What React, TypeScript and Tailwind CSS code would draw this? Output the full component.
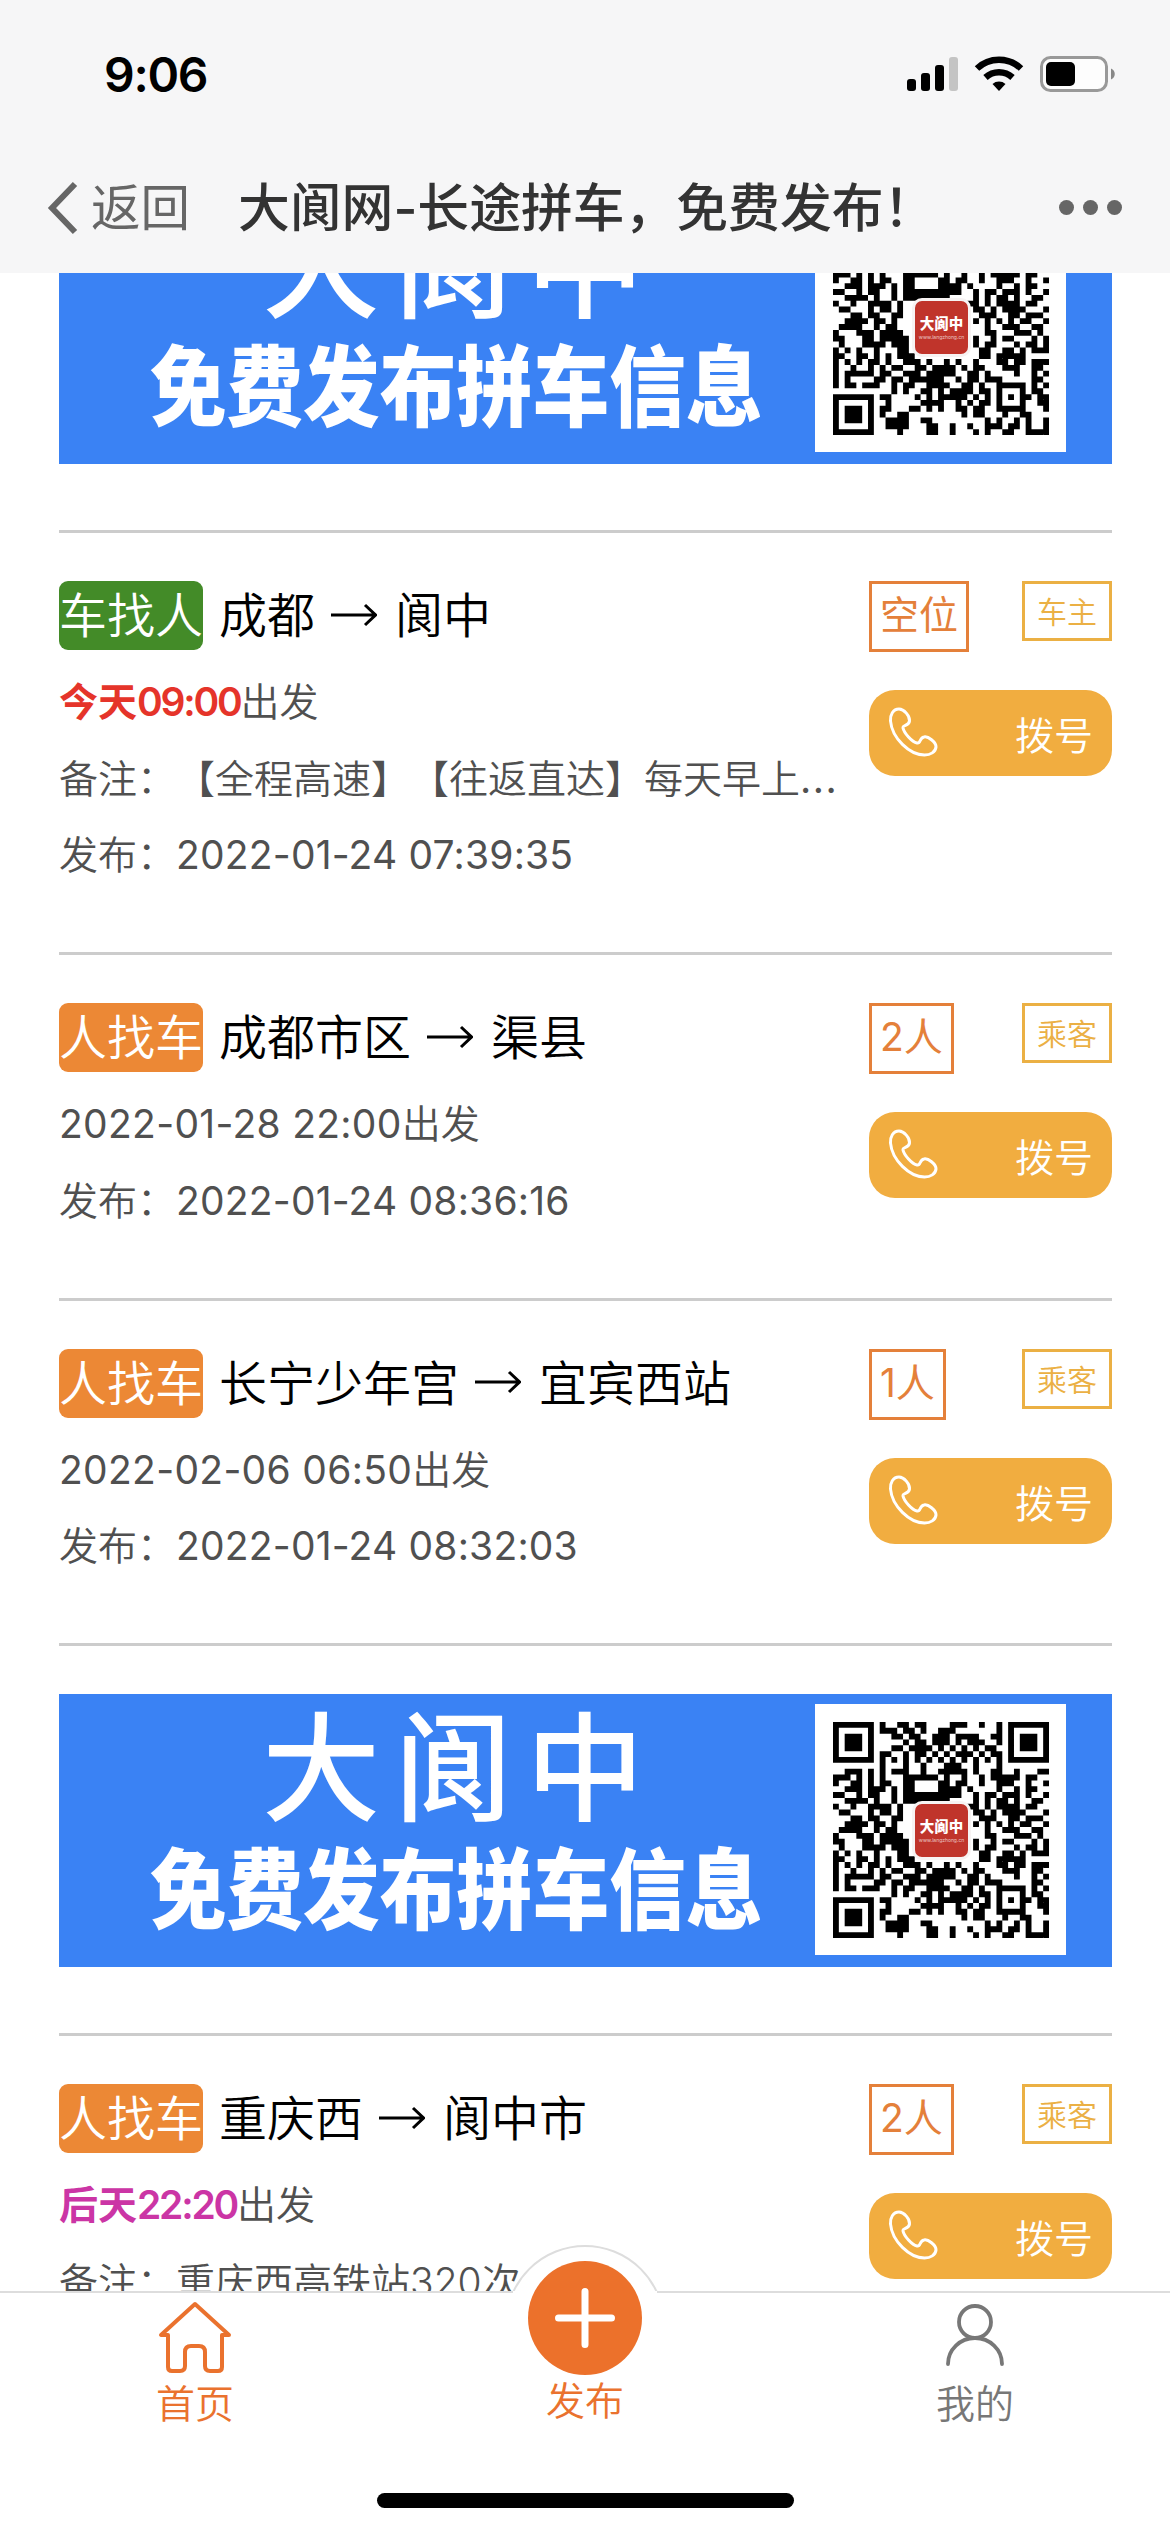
import clsx from 'clsx';

type Trip = {
  kind: 'car' | 'passenger';
  from: string;
  to: string;
  soon?: [string, string];
  soonColor?: string;
  date?: string;
  remark?: string;
  clipped?: boolean;
  posted?: string;
  seats: string;
};

const trips: Trip[] = [
  {
    kind: 'car',
    from: '成都',
    to: '阆中',
    soon: ['今天', '09:00'],
    soonColor: 'text-[#e5342a]',
    remark: '【全程高速】【往返直达】每天早上',
    clipped: true,
    posted: '2022-01-24 07:39:35',
    seats: '空位',
  },
  {
    kind: 'passenger',
    from: '成都市区',
    to: '渠县',
    date: '2022-01-28 22:00',
    posted: '2022-01-24 08:36:16',
    seats: '2人',
  },
  {
    kind: 'passenger',
    from: '长宁少年宫',
    to: '宜宾西站',
    date: '2022-02-06 06:50',
    posted: '2022-01-24 08:32:03',
    seats: '1人',
  },
  {
    kind: 'passenger',
    from: '重庆西',
    to: '阆中市',
    soon: ['后天', '22:20'],
    soonColor: 'text-[#cb35a5]',
    remark: '重庆西高铁站320次',
    seats: '2人',
  },
];

const qrRows = [
  '#######.#..##.##....###..#..#.#######',
  '#.....#.###.##.#..###.......#.#.....#',
  '#.###.#...##.##..###.####..##.#.###.#',
  '#.###.#.....#.##.###.#.###..#.#.###.#',
  '#.###.#...##.####.#.#.#.#.##..#.###.#',
  '#.....#.##..#.##.#.#.###.#.##.#.....#',
  '#######.#.#.#.#.#.#.#.#.#.#.#.#######',
  '........#...#..#...###..#...#........',
  '..###.#.#.###..#..#####.#..##..#...##',
  '###.#.#.#...######.#..#..#.#####.##..',
  '#..##.#.##..##....##.##..#..###..#..#',
  '..###.###.#.##....####.#....#..#.##..',
  '##..#.##..#.##########..#.##.###.#..#',
  '..####.#..#.########....#.#.##.#..##.',
  '#..#..####.#...........##.#.####.##..',
  '.##...#.##.#............##.#.####...#',
  '...##.##..##.............###..##.###.',
  '..####.##.#.............#.#.#.#.##..#',
  '.####..#.##...............#..###..##.',
  '#...###.####..............##...###.#.',
  '##...##.#####...........#..#.##...#.#',
  '.#...####.###...........#.##...#.##.#',
  '#.#.#..#...##............##..##.#.###',
  '##..##.#.#.###...........##.#####....',
  '#.#.#.##.#..###.#..#.#..#...##.##.###',
  '#..#..#.#.##..##.####.#.##...###..##.',
  '#.#####.##..###.#####..##.#....#..#.#',
  '#.#....##.##.######..#.##.###.....##.',
  '#.##.###..#.##..####..##.#..#####.#.#',
  '..........#.#..##.#.####.##.#...#.##.',
  '#######.##....#.#.#####.#.#.#.#.##.##',
  '#.....#..#.....####..#.#.##.#...#..##',
  '#.###.#.##...##.#.#..##.##..#####...#',
  '#.###.#.#..##.........#.##...#..##...',
  '#.###.#..####..##.........#.#..#.#..#',
  '#.....#..####...##..#..#..###.##.#..#',
  '#######....#....##..#...#.#..##..####',
];

const qrPath = qrRows
  .flatMap((row, y) => [...row].map((cell, x) => (cell === '#' ? `M${x} ${y}h1v1h-1z` : '')))
  .join('');

function StatusBar() {
  return (
    <div className="flex h-[142px] items-start justify-between pl-[104px] pr-[53px] pt-[44px]">
      <span className="text-[48px] font-semibold leading-[62px] tracking-[-1.3px] text-black">9:06</span>
      <svg width="210" height="40" viewBox="0 0 210 40" className="mt-[9px]">
        <rect x="0" y="26" width="9" height="12" rx="3" />
        <rect x="14" y="20" width="9" height="18" rx="3" />
        <rect x="28" y="12" width="9" height="26" rx="3" />
        <rect x="42" y="4" width="9" height="34" rx="3" fill="#c4c4c4" />
        <g fill="none" stroke="#000" strokeWidth="6.5">
          <path d="M70 15.5a32 32 0 0 1 44 0" />
          <path d="M78.500 24.500a20 20 0 0 1 27 0" />
        </g>
        <path d="M85.500 31a10 10 0 0 1 13 0l-6.500 7z" />
        <rect x="134.500" y="4.500" width="65" height="33" rx="9" fill="#fdfdfd" stroke="#999" strokeWidth="3" />
        <rect x="139" y="9" width="29" height="24" rx="5" />
        <path d="M204 15.500c5 2 5 9 0 11z" fill="#888" />
      </svg>
    </div>
  );
}

function TitleBar() {
  return (
    <div className="flex h-[131px] items-center pl-[45px] pr-[48px]">
      <svg width="34" height="54" viewBox="0 0 34 54" className="shrink-0">
        <path d="M30 3 7 27l23 24" fill="none" stroke="#666" strokeWidth="6" />
      </svg>
      <span className="ml-[12px] text-[49.500px] leading-[60px] text-[#666]">返回</span>
      <h1 className="ml-[48px] flex-1 whitespace-nowrap text-[51.800px] font-medium leading-[60px] text-[#333]">
        大阆网-长途拼车，免费发布！
      </h1>
      <div className="flex gap-[9px]">
        <i className="size-[15px] rounded-full bg-[#666]" />
        <i className="size-[15px] rounded-full bg-[#666]" />
        <i className="size-[15px] rounded-full bg-[#666]" />
      </div>
    </div>
  );
}

function QrCode() {
  return (
    <div className="relative ml-auto mr-[46px] size-[251px] bg-white p-[18px]">
      <svg width="216" height="216" viewBox="0 0 37 37">
        <path d={qrPath} />
      </svg>
      <div className="absolute left-[97px] top-[97px] flex size-[59px] flex-col items-center justify-center rounded-[10px] border-[3.500px] border-[#f7f3f3] bg-[#c0342b] text-white">
        <span className="text-[14.500px] font-black leading-[18px]">大阆中</span>
        <span className="text-[5px] leading-[8px] opacity-70">www.langzhong.cn</span>
      </div>
    </div>
  );
}

function Banner() {
  return (
    <div className="flex h-[273px] shrink-0 items-start bg-[#3a82f4] pt-[10px] text-white">
      <div className="w-[700px] shrink-0 whitespace-nowrap">
        <p className="ml-[203px] pt-[2px] text-[118px] font-medium leading-[126px] tracking-[14px]">大阆中</p>
        <p className="ml-[91px] mt-[2px] origin-left scale-x-[0.87] text-[88px] font-black leading-[112px]">
          免费发布拼车信息
        </p>
      </div>
      <QrCode />
    </div>
  );
}

function DialButton() {
  return (
    <button className="mt-[38px] flex h-[86px] w-full items-center justify-between rounded-[26px] bg-[#f1ad40] pl-[19px] pr-[19px] text-[39px] leading-none text-white">
      <svg width="50" height="50" viewBox="0 0 50 50" fill="none" stroke="#fff" strokeWidth="3" className="-mt-[2px]">
        <path d="M11 2C5 2 2 8 2.500 14c1.500 17 19 34 34 34 6 0 11-3 11.500-8 0-5-8-11-12-10-5 1-3 7-7 6-5-1-13-10-14-15-.5-3 6-2 6.500-7C22 9 16 2 11 2z" />
      </svg>
      <span className="mt-[5px]">拨号</span>
    </button>
  );
}

function TripCard({ trip }: { trip: Trip }) {
  const isCar = trip.kind === 'car';
  return (
    <article className="flex shrink-0 justify-between border-t-[3px] border-[#ccc] pb-[58.500px] pt-[48px] font-[350]">
      <div>
        <div className="flex h-[69px] items-center whitespace-nowrap text-[48px] leading-[69px] text-black">
          <span className={clsx('mr-[16px] h-[69px] w-[144px] rounded-[9px] text-white', isCar ? 'bg-[#438b28]' : 'bg-[#ec8835]')}>
            {isCar ? '车找人' : '人找车'}
          </span>
          <span>{trip.from}</span>
          <svg width="46" height="34" viewBox="0 0 46 34" className="ml-[16px] mr-[18px]" fill="none" stroke="#000" strokeWidth="3">
            <path d="M0 16h44M34 6l10.500 10L34 26" />
          </svg>
          <span>{trip.to}</span>
        </div>
        <div className="mt-[14px] whitespace-nowrap text-[39px] leading-[76.500px] text-[#505050]">
          <p>
            {trip.soon && (
              <b className={clsx('font-bold', trip.soonColor)}>
                {trip.soon[0]}
                <span className="font-semibold tracking-[-2.200px]">{trip.soon[1]}</span>
              </b>
            )}
            {trip.date && <span className="font-normal tracking-[0.300px]">{trip.date}</span>}出发
          </p>
          {trip.remark && (
            <p>
              备注：{trip.remark}
              {trip.clipped && <span className="font-normal tracking-[1.500px]">...</span>}
            </p>
          )}
          {trip.posted && (
            <p>
              发布：<span className="font-normal tracking-[0.200px]">{trip.posted}</span>
            </p>
          )}
        </div>
      </div>
      <div className="w-[243px]">
        <div className="flex items-start justify-between">
          <span className="h-[71px] border-[3px] border-[#e4803a] px-[8px] text-[39px] font-normal leading-[62px] text-[#e4803a]">{trip.seats}</span>
          <span className="h-[60px] border-[3px] border-[#ebb044] px-[12px] text-[30px] leading-[56px] text-[#ebb044]">{isCar ? '车主' : '乘客'}</span>
        </div>
        <DialButton />
      </div>
    </article>
  );
}

function TabBar() {
  return (
    <footer className="relative h-[241px] shrink-0 border-t-2 border-[#ddd] bg-white text-[39px] font-[350] leading-[46px]">
      {/* raised rim behind the publish button */}
      <div className="absolute left-[505px] top-[-48px] h-[46px] w-[160px] overflow-hidden">
        <div className="size-[160px] rounded-full border-2 border-[#ddd] bg-white" />
      </div>
      <div className="absolute left-[513px] top-[-2px] h-[2px] w-[144px] bg-white" />
      <nav className="relative grid h-[150px] grid-cols-[390px_390px_390px]">
        <div className="flex flex-col items-center pt-[7px] text-[#ea722e]">
          <svg width="74" height="74" viewBox="0 0 74 74" fill="none" stroke="#ea722e" strokeWidth="4" strokeLinejoin="round">
            <path d="M37 4 3 35h7v32q0 4 4 4h8q5 0 5-5V52q0-6 6-6h8q6 0 6 6v14q0 5 5 5h8q4 0 4-4V35h7z" />
          </svg>
          <span className="mt-[7px]">首页</span>
        </div>
        <div className="-mt-[32px] flex flex-col items-center text-[#ea722e]">
          <div className="flex size-[114px] shrink-0 items-center justify-center rounded-full bg-[#ec712b]">
            <svg width="60" height="60" viewBox="0 0 60 60" stroke="#fff" strokeWidth="7" strokeLinecap="round">
              <path d="M30 3.500v53M3.500 30h53" />
            </svg>
          </div>
          <span className="mt-[3px]">发布</span>
        </div>
        <div className="flex flex-col items-center pt-[7px] text-[#777]">
          <svg width="74" height="74" viewBox="0 0 74 74" fill="none" stroke="#777" strokeWidth="3.800" strokeLinecap="round">
            <circle cx="37" cy="22" r="16" />
            <path d="M10 64a27 26 0 0 1 54 0" />
          </svg>
          <span className="mt-[7px]">我的</span>
        </div>
      </nav>
      <div className="mx-auto mt-[50px] h-[15px] w-[417px] rounded-full bg-black" />
    </footer>
  );
}

export default function App() {
  return (
    <div className="flex h-[2532px] w-[1170px] flex-col overflow-hidden bg-white font-[Inter,'Noto_Sans_CJK_SC',sans-serif] [text-spacing-trim:space-all]">
      <header className="h-[273px] shrink-0 bg-[#f6f6f7]">
        <StatusBar />
        <TitleBar />
      </header>
      <main className="flex min-h-0 flex-1 flex-col overflow-hidden pl-[59px] pr-[58px]">
        <div className="-mt-[82px] mb-[66px] flex flex-col">
          <Banner />
        </div>
        {trips.slice(0, 3).map((trip) => (
          <TripCard key={trip.posted} trip={trip} />
        ))}
        <div className="mb-[66px] border-t-[3px] border-[#ccc] pt-[48px]">
          <Banner />
        </div>
        <TripCard trip={trips[3]} />
      </main>
      <TabBar />
    </div>
  );
}
